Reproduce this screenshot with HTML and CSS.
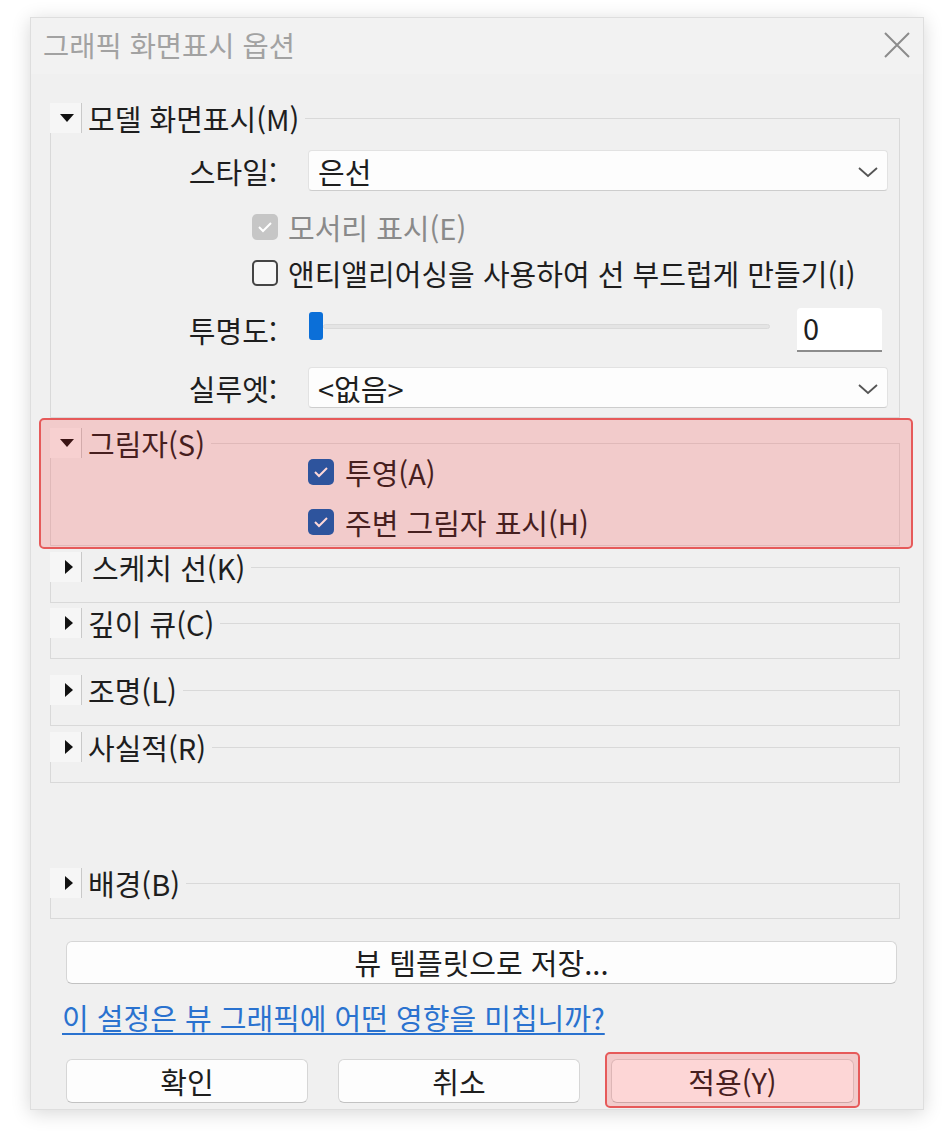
FILE: index.html
```html
<!DOCTYPE html>
<html lang="ko">
<head>
<meta charset="utf-8">
<title>그래픽 화면표시 옵션</title>
<link rel="stylesheet" href="styles.css">
</head>
<body>
<div class="dialog">
  <div class="titlebar">
    <span class="title">그래픽 화면표시 옵션</span>
    <svg class="close" width="26" height="26" viewBox="0 0 26 26"><path d="M1 1L25 25M25 1L1 25" stroke="#8c8c8c" stroke-width="2" fill="none"/></svg>
  </div>
  <div class="content">
    <section class="group g-model">
      <div class="head">
        <span class="toggle"><svg width="16" height="10" viewBox="0 0 16 10"><path d="M1 1H15L8 9Z" fill="#111"/></svg></span>
        <span class="gtitle">모델 화면표시(M)</span>
      </div>
      <div class="row r-style">
        <span class="label">스타일:</span>
        <div class="select"><span>은선</span><svg class="chev" width="22" height="12" viewBox="0 0 22 12"><path d="M2 2L11 10L20 2" stroke="#555" stroke-width="1.8" fill="none"/></svg></div>
      </div>
      <div class="row crow r-edge">
        <span class="cb disabled"><svg width="18" height="14" viewBox="0 0 18 14"><path d="M3 7L7 11L15 3" stroke="#fff" stroke-width="2" fill="none"/></svg></span>
        <span class="ctext muted">모서리 표시(E)</span>
      </div>
      <div class="row crow r-aa">
        <span class="cb empty"></span>
        <span class="ctext">앤티앨리어싱을 사용하여 선 부드럽게 만들기(I)</span>
      </div>
      <div class="row r-trans">
        <span class="label">투명도:</span>
        <div class="slider"><span class="thumb"></span><span class="track"></span></div>
        <div class="num">0</div>
      </div>
      <div class="row r-sil">
        <span class="label">실루엣:</span>
        <div class="select"><span>&lt;없음&gt;</span><svg class="chev" width="22" height="12" viewBox="0 0 22 12"><path d="M2 2L11 10L20 2" stroke="#555" stroke-width="1.8" fill="none"/></svg></div>
      </div>
    </section>

    <div class="mark mark-shadow">
      <section class="group g-shadow">
        <div class="head">
          <span class="toggle"><svg width="16" height="10" viewBox="0 0 16 10"><path d="M1 1H15L8 9Z" fill="#111"/></svg></span>
          <span class="gtitle">그림자(S)</span>
        </div>
        <div class="row crow2 r-cast">
          <span class="cb checked"><svg width="18" height="14" viewBox="0 0 18 14"><path d="M3 7L7 11L15 3" stroke="#fff" stroke-width="2" fill="none"/></svg></span>
          <span class="ctext">투영(A)</span>
        </div>
        <div class="row crow2 r-amb">
          <span class="cb checked"><svg width="18" height="14" viewBox="0 0 18 14"><path d="M3 7L7 11L15 3" stroke="#fff" stroke-width="2" fill="none"/></svg></span>
          <span class="ctext">주변 그림자 표시(H)</span>
        </div>
      </section>
    </div>

    <section class="group collapsed g-sketch">
      <div class="head">
        <span class="toggle"><svg width="10" height="16" viewBox="0 0 10 16"><path d="M1 1V15L9 8Z" fill="#111"/></svg></span>
        <span class="gtitle indent">스케치 선(K)</span>
      </div>
    </section>
    <section class="group collapsed g-depth">
      <div class="head">
        <span class="toggle"><svg width="10" height="16" viewBox="0 0 10 16"><path d="M1 1V15L9 8Z" fill="#111"/></svg></span>
        <span class="gtitle">깊이 큐(C)</span>
      </div>
    </section>
    <section class="group collapsed g-light">
      <div class="head">
        <span class="toggle"><svg width="10" height="16" viewBox="0 0 10 16"><path d="M1 1V15L9 8Z" fill="#111"/></svg></span>
        <span class="gtitle">조명(L)</span>
      </div>
    </section>
    <section class="group collapsed g-real">
      <div class="head">
        <span class="toggle"><svg width="10" height="16" viewBox="0 0 10 16"><path d="M1 1V15L9 8Z" fill="#111"/></svg></span>
        <span class="gtitle">사실적(R)</span>
      </div>
    </section>
    <section class="group collapsed g-bg">
      <div class="head">
        <span class="toggle"><svg width="10" height="16" viewBox="0 0 10 16"><path d="M1 1V15L9 8Z" fill="#111"/></svg></span>
        <span class="gtitle">배경(B)</span>
      </div>
    </section>

    <button class="btn save">뷰 템플릿으로 저장...</button>
    <a class="link" href="#">이 설정은 뷰 그래픽에 어떤 영향을 미칩니까?</a>
    <div class="actions">
      <button class="btn">확인</button>
      <button class="btn">취소</button>
      <div class="mark mark-apply"><button class="btn">적용(Y)</button></div>
    </div>
  </div>
</div>
</body>
</html>
```

FILE: styles.css
```css
* { box-sizing: border-box; }
html, body { margin: 0; padding: 0; background: #ffffff; }
body {
  font-family: "Noto Sans CJK KR", "Noto Sans", sans-serif;
  font-size: 29px;
  line-height: 30px;
  color: #1e1e1e;
  padding: 17px 0 0 30px;
  height: 1138px;
  overflow: hidden;
}
.dialog {
  width: 894px;
  height: 1093px;
  background: #f0f0f0;
  border: 1px solid #dedede;
  box-shadow: 0 3px 18px rgba(0, 0, 0, 0.16);
  display: flex;
  flex-direction: column;
}
.titlebar {
  height: 56px;
  display: flex;
  align-items: center;
  justify-content: space-between;
  padding: 0 13px 0 12px;
  background: #f2f2f2;
}
.title { color: #a2a2a2; font-size: 28.5px; line-height: 1; margin-top: -2px; }
.close { margin-top: -2px; }
.content {
  padding: 0 23px 0 19px;
  display: flex;
  flex-direction: column;
}
.group {
  border: 1px solid #d9d9d9;
  display: flex;
  flex-direction: column;
}
.head {
  display: flex;
  align-items: center;
  height: 30px;
  margin: -16px 0 0 -1px;
}
.toggle {
  width: 32px;
  height: 30px;
  background: #f6f6f6;
  border-right: 1px solid #c9c9c9;
  display: flex;
  align-items: center;
  justify-content: center;
  padding-left: 2px;
}
.collapsed .toggle { padding-left: 6px; }
.gtitle {
  background: #f0f0f0;
  line-height: 30px;
  padding: 0 6px 0 6px;
  white-space: nowrap;
}
.gtitle.indent { padding-left: 10px; }

.g-model { margin-top: 44px; padding-bottom: 9px; }
.row { display: flex; align-items: center; }
.label { width: 226px; text-align: right; flex: none; }
.select {
  flex: 1;
  margin-left: 31px;
  margin-right: 11px;
  height: 41px;
  background: #fdfdfd;
  border: 1px solid #e2e2e2;
  border-bottom-color: #cdcdcd;
  border-radius: 4px;
  display: flex;
  align-items: center;
  justify-content: space-between;
  padding: 0 8px 0 9px;
}
.chev { margin-top: 2px; }
.r-style { margin-top: 17px; }
.crow { padding-left: 201px; height: 36px; }
.r-edge { margin-top: 18px; }
.r-aa { margin-top: 10px; }
.r-trans { margin-top: 17px; height: 44px; }
.r-sil { margin-top: 15px; }
.cb {
  width: 26px;
  height: 26px;
  border-radius: 5px;
  flex: none;
  display: flex;
  align-items: center;
  justify-content: center;
}
.cb.disabled { background: #c6c6c6; }
.cb.empty { border: 2px solid #454545; background: #f7f7f7; }
.cb.checked { background: #005fb8; }
.ctext { margin-left: 10px; white-space: nowrap; }
.muted { color: #8a8a8a; }
.slider {
  flex: 1;
  margin-left: 32px;
  display: flex;
  align-items: center;
  height: 44px;
}
.thumb {
  width: 14px;
  height: 28px;
  background: #0b6fd8;
  border-radius: 3px;
  margin-top: -8px;
}
.track {
  flex: 1;
  height: 5px;
  background: #e4e4e4;
  border: 1px solid #dadada;
  border-radius: 3px;
  margin-top: -8px;
}
.num {
  width: 85px;
  height: 44px;
  margin-left: 27px;
  margin-right: 17px;
  background: #ffffff;
  border-bottom: 2px solid #8c8c8c;
  border-radius: 4px 4px 0 0;
  padding: 0 0 0 6px;
  line-height: 38px;
}

.mark { position: relative; }
.mark::after {
  content: "";
  position: absolute;
  inset: 0;
  background: rgba(255, 40, 40, 0.18);
  border: 2px solid #e65a5a;
  border-radius: 5px;
  pointer-events: none;
}
.mark-shadow { margin: 0 -13px 0 -11px; padding: 25px 13px 3px 11px; }
.g-shadow { padding-bottom: 8px; }
.crow2 { padding-left: 257px; height: 30px; }
.crow2 .ctext { margin-left: 11px; }
.r-cast { margin-top: -1px; }
.r-amb { margin-top: 20px; }

.collapsed { padding-bottom: 20px; }
.g-sketch { margin-top: 18px; }
.g-depth { margin-top: 20px; }
.g-light { margin-top: 31px; }
.g-real { margin-top: 21px; }
.g-bg { margin-top: 100px; }

.btn {
  font-family: inherit;
  font-size: 29px;
  color: #1e1e1e;
  background: #fdfdfd;
  border: 1px solid #d6d6d6;
  border-bottom-color: #c2c2c2;
  border-radius: 6px;
  height: 44px;
  padding: 0;
  line-height: 1;
}
.save { margin: 22px 3px 0 16px; height: 43px; }
.link {
  margin: 18px 0 0 12px;
  line-height: 30px;
  color: #2a72cf;
  text-decoration: underline;
  text-underline-offset: 3px;
  align-self: flex-start;
}
.actions {
  margin: 27px 0 0 16px;
  display: flex;
  align-items: center;
}
.actions > .btn { width: 242px; }
.actions > .btn + .btn { margin-left: 30px; }
.mark-apply { margin: -7px 0 -5px 25px; padding: 7px 6px 5px 6px; }
.mark-apply .btn { width: 243px; display: block; }
```
